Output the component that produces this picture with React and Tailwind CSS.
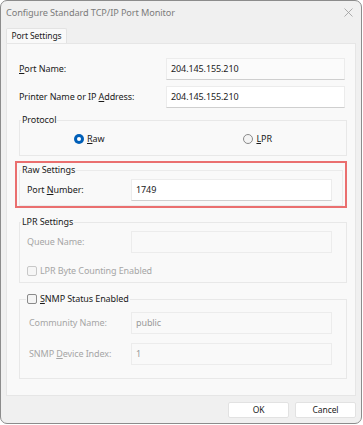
import React from 'react';

const Radio = ({ checked, label, ul }) => (
  <div className="flex items-center gap-[3px]">
    {checked ? (
      <span className="flex h-[10px] w-[10px] items-center justify-center rounded-full bg-[#005fb8]">
        <span className="h-[4px] w-[4px] rounded-full bg-white" />
      </span>
    ) : (
      <span className="h-[10px] w-[10px] rounded-full border border-[#8a8a8a] bg-[#f4f4f4]" />
    )}
    <span className="text-[#1b1b1b]">
      <span className="underline underline-offset-1">{ul}</span>
      {label}
    </span>
  </div>
);

const Check = ({ disabled }) => (
  <span
    className={
      'h-[10px] w-[10px] rounded-[2px] border ' +
      (disabled ? 'border-[#c8c8c8] bg-[#f6f6f6]' : 'border-[#8a8a8a] bg-[#f4f4f4]')
    }
  />
);

const Field = ({ value, disabled, className = '' }) => (
  <div
    className={
      'flex h-[22px] items-center px-[4px] ' +
      (disabled
        ? 'border border-[#ececec] bg-[#f9f9f9] text-[#9a9a9a] '
        : 'border border-[#ececec] border-b-[#cfcfcf] bg-white text-[#1b1b1b] ') +
      className
    }
  >
    {value}
  </div>
);

export default function App() {
  return (
    <div
      className="h-[425px] w-[363px] bg-white text-[9px] tracking-[-0.1px]"
      style={{ fontFamily: '"Noto Sans", "Open Sans", sans-serif' }}
    >
      <div className="flex h-[424px] w-[362px] flex-col overflow-hidden rounded-[7px] border border-[#8c8c8c] bg-[#f0f0f0]">
        {/* Title bar */}
        <div className="flex h-[23px] shrink-0 items-center justify-between pl-[5px] pr-[8px] text-[9.2px] text-[#7c7c7c]">
          <span>Configure Standard TCP/IP Port Monitor</span>
          <svg width="9" height="9" viewBox="0 0 9 9" className="text-[#9a9a9a]">
            <path d="M0.5 0.5 L8.5 8.5 M8.5 0.5 L0.5 8.5" stroke="currentColor" strokeWidth="0.8" />
          </svg>
        </div>

        {/* Tabs */}
        <div className="flex h-[19px] shrink-0 items-end pl-[5px]">
          <div className="flex h-[15px] w-[61px] items-center justify-center rounded-t-[2px] border border-b-0 border-[#e3e3e3] bg-[#f9f9f9] text-[8.5px] text-[#1b1b1b]">
            Port Settings
          </div>
        </div>

        {/* Panel */}
        <div className="ml-[5px] h-[353px] w-[350px] shrink-0 border border-[#e6e6e6] bg-[#f9f9f9] text-[#1b1b1b]">
          <div className="mt-[14px] flex items-center">
            <span className="w-[159px] pl-[12px]">
              <span className="underline underline-offset-1">P</span>ort Name:
            </span>
            <Field value="204.145.155.210" className="w-[179px] !bg-[#fbfbfb]" />
          </div>
          <div className="mt-[6px] flex items-center">
            <span className="w-[159px] pl-[12px]">
              Printer Name or IP <span className="underline underline-offset-1">A</span>ddress:
            </span>
            <Field value="204.145.155.210" className="h-[21px] w-[179px]" />
          </div>

          {/* Protocol */}
          <fieldset className="ml-[12px] mt-[5px] h-[43px] w-[328px] border border-[#e8e8e8]">
            <legend className="ml-[1px] px-[1px] leading-[14px]">Protocol</legend>
            <div className="mt-[5px] flex items-center">
              <div className="ml-[54px]">
                <Radio checked label="aw" ul="R" />
              </div>
              <div className="ml-[139px]">
                <Radio label="PR" ul="L" />
              </div>
            </div>
          </fieldset>

          {/* Raw settings (highlighted) */}
          <div className="ml-[8px] mt-[5px] h-[47px] w-[332px] border-2 border-[#ea6f6f] pl-[2px]">
            <fieldset className="h-[43px] w-[324px] border border-[#ebebeb]">
              <legend className="ml-[1px] px-[1px] leading-[14px]">Raw Settings</legend>
              <div className="mt-[2px] flex items-center">
                <span className="w-[111px] pl-[7px]">
                  Port <span className="underline underline-offset-1">N</span>umber:
                </span>
                <Field value="1749" className="w-[201px] pl-[4px]" />
              </div>
            </fieldset>
          </div>

          {/* LPR settings */}
          <fieldset className="ml-[12px] mt-[7px] h-[68px] w-[328px] border border-[#e8e8e8]">
            <legend className="ml-[1px] px-[1px] leading-[14px]">LPR Settings</legend>
            <div className="mt-[2px] flex items-center">
              <span className="w-[111px] pl-[7px] text-[#a6a6a6]">Queue Name:</span>
              <Field disabled value="" className="w-[201px]" />
            </div>
            <div className="mt-[11px] flex items-center gap-[3px] pl-[7px] text-[#a6a6a6]">
              <Check disabled />
              <span>LPR Byte Counting Enabled</span>
            </div>
          </fieldset>

          {/* SNMP */}
          <fieldset className="ml-[12px] mt-[9px] h-[87px] w-[328px] border border-[#e8e8e8]">
            <legend className="ml-[6px] flex items-center gap-[3px] px-[1px] leading-[14px]">
              <Check />
              <span>
                <span className="underline underline-offset-1">S</span>NMP Status Enabled
              </span>
            </legend>
            <div className="mt-[6px] flex items-center">
              <span className="w-[111px] pl-[9px] text-[#a6a6a6]">Community Name:</span>
              <Field disabled value="public" className="h-[21px] w-[201px]" />
            </div>
            <div className="mt-[9px] flex items-center">
              <span className="w-[111px] pl-[9px] text-[#a6a6a6]">
                SNMP <span className="underline underline-offset-1">D</span>evice Index:
              </span>
              <Field disabled value="1" className="h-[21px] w-[201px]" />
            </div>
          </fieldset>
        </div>

        {/* Buttons */}
        <div className="mt-[6px] flex justify-end gap-[6px] pr-[5px]">
          <button className="h-[16px] w-[61px] rounded-[2px] border border-[#e2e2e2] bg-white text-[8.5px] text-[#1b1b1b]">
            OK
          </button>
          <button className="h-[16px] w-[61px] rounded-[2px] border border-[#e2e2e2] bg-white text-[8.5px] text-[#1b1b1b]">
            Cancel
          </button>
        </div>
      </div>
    </div>
  );
}
